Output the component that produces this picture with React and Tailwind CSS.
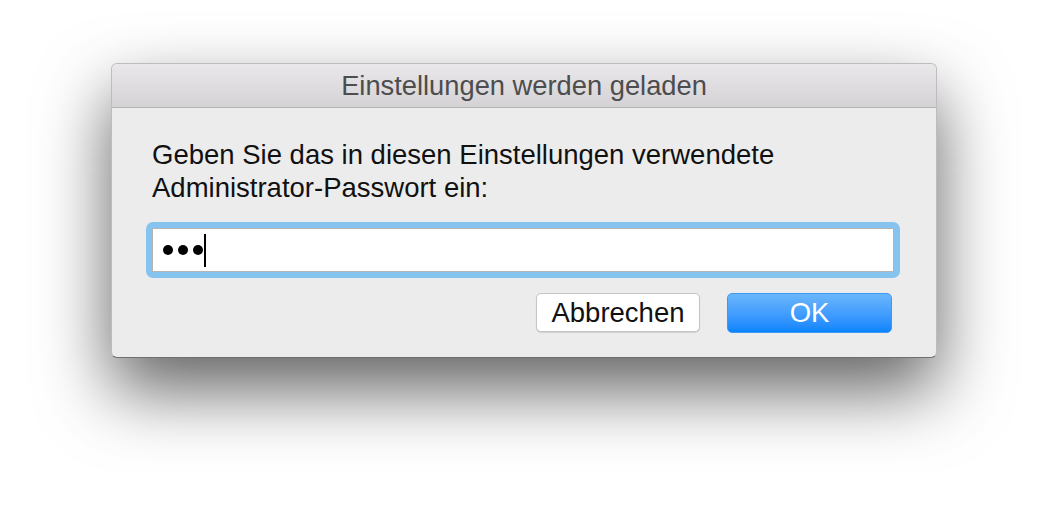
export default function App() {
  const font = { fontFamily: '"Liberation Sans", Arial, sans-serif' };
  return (
    <div className="w-[1048px] h-[518px] bg-white flex justify-center pt-[63px]" style={font}>
      <div className="w-[826px] h-[295px] rounded-[6px] border border-[#bdbdbd] border-b-[#6f6f6f] bg-[#ececec] shadow-[0_32px_70px_rgba(0,0,0,0.62)] flex flex-col overflow-hidden">
        <div className="h-[44px] shrink-0 border-b border-[#b3b3b3] bg-gradient-to-b from-[#ebe8ec] to-[#d4d2d4] flex items-center justify-center">
          <span className="text-[27.3px] text-[#4d4d4d] leading-none">Einstellungen werden geladen</span>
        </div>
        <div className="flex flex-col pl-[34px] pt-[30px]">
          <p className="pl-[6px] text-[27.5px] leading-[33px] text-[#111]">
            Geben Sie das in diesen Einstellungen verwendete
            <br />
            Administrator-Passwort ein:
          </p>
          <div className="mt-[18px] w-[754px] h-[56px] rounded-[7px] bg-[#86c3ef] p-[6px]">
            <div className="h-full bg-white border border-[#b4b4b4] flex items-center pl-[10px]">
              <div className="flex items-center gap-[5px]">
                <div className="w-[10px] h-[10px] rounded-full bg-black" />
                <div className="w-[10px] h-[10px] rounded-full bg-black" />
                <div className="w-[10px] h-[10px] rounded-full bg-black" />
              </div>
              <div className="ml-[1px] w-[2px] h-[33px] bg-black" />
            </div>
          </div>
          <div className="mt-[15px] w-[746px] flex justify-end gap-[27px]">
            <div className="w-[164px] h-[39px] rounded-[5px] bg-white border border-[#c4c4c4] shadow-[0_1px_1px_rgba(0,0,0,0.12)] flex items-center justify-center text-[27.5px] text-[#111]">
              Abbrechen
            </div>
            <div className="w-[165px] h-[40px] rounded-[5px] bg-gradient-to-b from-[#6ab6fb] to-[#0784fe] border border-[#3d97f5] flex items-center justify-center text-[27.5px] text-white">
              OK
            </div>
          </div>
        </div>
      </div>
    </div>
  );
}
